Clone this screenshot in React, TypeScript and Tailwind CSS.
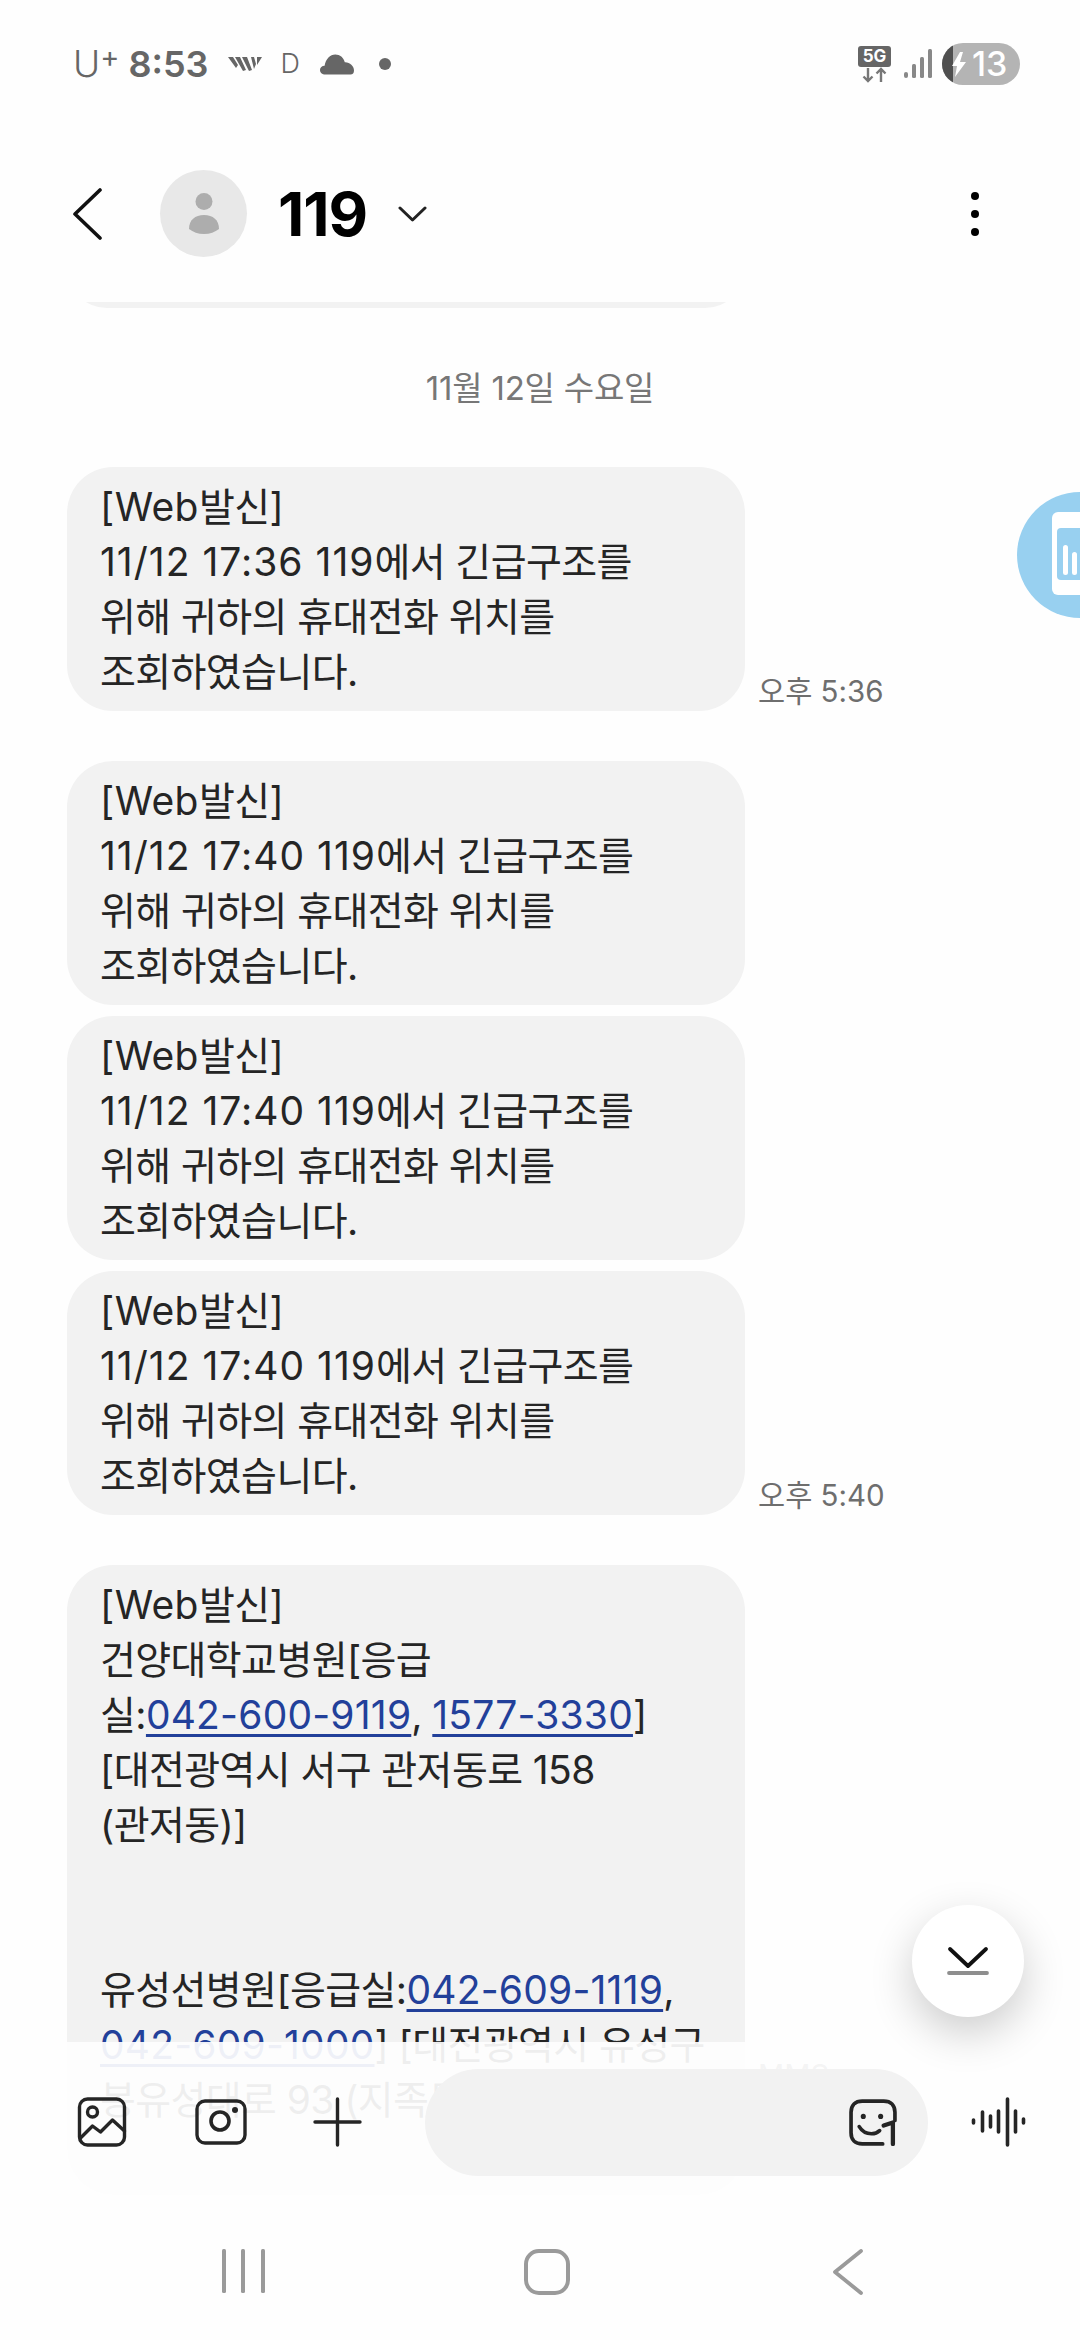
import React from "react";

function Link({ children }: { children: React.ReactNode }) {
  return <span className="tracking-[0.2px] text-[#22409a] underline decoration-[3px] underline-offset-[5px]">{children}</span>;
}

function Lat({ children }: { children: React.ReactNode }) {
  return <span className="tracking-[0.4px]">{children}</span>;
}

function Num({ children }: { children: React.ReactNode }) {
  return <span className="tracking-[1px]">{children}</span>;
}

function Bubble({ time, children, cls = "" }: { time?: string; children: React.ReactNode; cls?: string }) {
  return (
    <div className={`flex items-end ${cls}`}>
      <div className="w-[678px] rounded-[46px] bg-[#f2f2f2] px-[33px] py-[12px] text-[39px] leading-[55px] tracking-[-0.6px] text-[#252525]">
        {children}
      </div>
      {time && <span className="ml-[13px] text-[29.5px] leading-[40px] text-[#6e6e6e]">{time}</span>}
    </div>
  );
}

function Rescue({ t }: { t: string }) {
  return (
    <>
      <div><Lat>[Web</Lat>발신<Lat>]</Lat></div>
      <div><Num>11/12 {t} 119</Num>에서 긴급구조를</div>
      <div>위해 귀하의 휴대전화 위치를</div>
      <div>조회하였습니다.</div>
    </>
  );
}

export default function App() {
  return (
    <div className="relative flex h-[2340px] w-[1080px] flex-col overflow-hidden bg-[#fefefe] font-[Inter,'Noto_Sans_CJK_KR',sans-serif]">
      {/* status bar */}
      <div className="flex h-[125px] shrink-0 items-start justify-between pl-[73px] pr-[60px] pt-[42px] text-[#666666]">
        <div className="flex h-[44px] items-center">
          <span className="text-[37px] font-light leading-[44px]">U</span>
          <span className="mb-[14px] text-[29px] font-normal leading-[28px]">+</span>
          <span className="ml-[9px] text-[36px] font-semibold leading-[44px]">8:53</span>
          <svg className="ml-[19px]" width="34" height="16" viewBox="0 0 34 16" fill="#666">
            <path d="M0 1h5l5 8-2 3zM7 1h5l6 13-3 1zM14 1h5l5 13-3 1zM23 1h3l2 7-2 5zM29 1h5l-5 8z" />
          </svg>
          <span className="ml-[19px] text-[27px] font-light leading-[30px]">D</span>
          <svg className="ml-[19px]" width="36" height="21" viewBox="0 0 35 21" fill="#666">
            <path d="M6 20.5c-3.5 0-5.5-2-5.5-4.5 0-2.6 2-4.3 4.6-4.3C6.300 5 10.600.5 15.800.5c4.700 0 8.200 3 9.500 7.800 4.700-.3 9.200 3.500 9.200 8.200 0 2.500-1.200 4-3.500 4z" />
          </svg>
          <span className="ml-[24px] h-[12px] w-[12px] rounded-full bg-[#666666]" />
        </div>
        <div className="flex h-[44px] items-center">
          <div className="flex w-[33px] flex-col items-center">
            <span className="flex h-[21px] w-[33px] items-center justify-center rounded-[3px] bg-[#666666] text-[17px] font-bold leading-[21px] text-white">5G</span>
            <svg width="26" height="16" viewBox="0 0 26 16" fill="none" stroke="#777" strokeWidth="2.400">
              <path d="M6 1v13M1.500 9.500 6 14l4.500-4.500M19 15V2M14.500 6.500 19 2l4.500 4.500" />
            </svg>
          </div>
          <svg className="ml-[13px] mt-[-1px]" width="28" height="30" viewBox="0 0 28 30" fill="#888">
            <rect x="0" y="23" width="4" height="6" rx="2" />
            <rect x="8" y="15" width="4" height="14" rx="1.500" />
            <rect x="16" y="8" width="4" height="21" rx="1.500" />
            <rect x="24" y="0" width="4" height="29" rx="1.500" />
          </svg>
          <div className="relative ml-[10px] flex h-[42px] w-[78px] items-center overflow-hidden rounded-full bg-[#b4b4b4]">
            <span className="absolute left-0 top-0 h-full w-[11px] bg-[#4f4f4f]" />
            <svg className="relative ml-[10px]" width="14" height="25" viewBox="0 0 14 25" fill="#fff">
              <path d="M8 0 0 14h5l-2 11 11-15H8l3-10z" />
            </svg>
            <span className="relative ml-[6px] text-[34px] font-medium leading-[40px] text-white">13</span>
          </div>
        </div>
      </div>

      {/* header */}
      <div className="flex h-[177px] shrink-0 items-center pl-[73px] pr-[101px]">
        <svg width="29" height="52" viewBox="0 0 29 52" fill="none" stroke="#111" strokeWidth="3.600" strokeLinecap="round" strokeLinejoin="round">
          <path d="M27 2 2 26l25 24" />
        </svg>
        <div className="ml-[58px] flex h-[87px] w-[87px] items-center justify-center rounded-full bg-[#e8e8e8]">
          <svg width="30" height="42" viewBox="0 0 30 42" fill="#adadad">
            <circle cx="15" cy="8.500" r="8.500" />
            <path d="M0 36c0-9 6-14 15-14s15 5 15 14c-4 3-9 5-15 5S4 39 0 36z" />
          </svg>
        </div>
        <span className="ml-[31px] text-[61px] font-bold leading-[70px] tracking-[-1px] text-black">119</span>
        <svg className="ml-[31px]" width="29" height="16" viewBox="0 0 29 16" fill="none" stroke="#222" strokeWidth="3" strokeLinecap="round" strokeLinejoin="round">
          <path d="M2 2l12.500 12L27 2" />
        </svg>
        <div className="ml-auto flex flex-col gap-[10px]">
          <span className="h-[8px] w-[8px] rounded-full bg-black" />
          <span className="h-[8px] w-[8px] rounded-full bg-black" />
          <span className="h-[8px] w-[8px] rounded-full bg-black" />
        </div>
      </div>

      {/* messages */}
      <div className="flex min-h-0 flex-1 flex-col overflow-hidden pl-[67px]">
        <div className="flex h-[6px] shrink-0 items-end overflow-hidden">
          <div className="h-[80px] w-[678px] shrink-0 rounded-[46px] bg-[#f2f2f2]" />
        </div>
        <div className="mt-[60px] h-[40px] w-[946px] shrink-0 text-center text-[33px] leading-[40px] tracking-[-0.2px] text-[#777777]">
          11월 12일 수요일
        </div>
        <Bubble cls="mt-[59px] shrink-0" time="오후 5:36"><Rescue t="17:36" /></Bubble>
        <Bubble cls="mt-[50px] shrink-0"><Rescue t="17:40" /></Bubble>
        <Bubble cls="mt-[11px] shrink-0"><Rescue t="17:40" /></Bubble>
        <Bubble cls="mt-[11px] shrink-0" time="오후 5:40"><Rescue t="17:40" /></Bubble>
        <div className="mt-[50px] flex shrink-0 items-start">
          <div className="w-[678px] rounded-[46px] bg-[#f2f2f2] px-[33px] pb-[68px] pt-[12px] text-[39px] leading-[55px] tracking-[-0.6px] text-[#252525]">
            <div><Lat>[Web</Lat>발신<Lat>]</Lat></div>
            <div>건양대학교병원[응급</div>
            <div>실:<Link>042-600-9119</Link>, <Link>1577-3330</Link>]</div>
            <div>[대전광역시 서구 관저동로 158</div>
            <div>(관저동)]</div>
            <div className="h-[55px]" />
            <div className="h-[55px]" />
            <div className="whitespace-nowrap">유성선병원[응급실:<Link>042-609-1119</Link>,</div>
            <div className="whitespace-nowrap"><Link>042-609-1000</Link>] [대전광역시 유성구</div>
            <div className="whitespace-nowrap">봉유성대로 93 (지족동)]</div>
          </div>
          <span className="ml-[13px] mt-[490px] text-[29px] leading-[40px] text-[#6e6e6e]">MMS</span>
        </div>
      </div>

      {/* edge panel handle */}
      <div className="absolute left-[1017px] top-[492px] h-[126px] w-[126px] rounded-full bg-[#98d0f0]">
        <div className="absolute left-[35px] top-[20px] h-[83px] w-[60px] rounded-[6px] bg-white">
          <div className="absolute left-[5px] top-[16px] h-[52px] w-[50px] rounded-[4px] bg-[#98d0f0]">
            <span className="absolute left-[6px] top-[17px] h-[30px] w-[5px] rounded-full bg-white" />
            <span className="absolute left-[15px] top-[24px] h-[23px] w-[5px] rounded-full bg-white" />
          </div>
        </div>
      </div>

      {/* bottom translucent panel */}
      <div className="absolute bottom-0 left-0 flex h-[298px] w-full flex-col bg-[#fefefe]/93">
        <div className="flex h-[170px] shrink-0 items-center pb-[38px] pt-[28px]">
          <svg className="ml-[77px]" width="50" height="50" viewBox="0 0 49 50" fill="none" stroke="#252525" strokeWidth="3.400" strokeLinecap="round" strokeLinejoin="round">
            <rect x="2" y="2" width="45" height="46" rx="8" />
            <circle cx="15" cy="15" r="5" />
            <path d="M3 41 15 29l8 6 12-12 12 11" />
          </svg>
          <svg className="ml-[68px]" width="52" height="46" viewBox="0 0 52 46" fill="none" stroke="#252525" strokeWidth="3.400">
            <rect x="2" y="2" width="48" height="42" rx="8" />
            <circle cx="25" cy="22" r="9" strokeWidth="3.600" />
            <circle cx="40" cy="11" r="3" fill="#252525" stroke="none" />
          </svg>
          <svg className="ml-[66px]" width="49" height="50" viewBox="0 0 49 50" fill="none" stroke="#252525" strokeWidth="3.400" strokeLinecap="round">
            <path d="M24.500 2v46M2 25h45" />
          </svg>
          <div className="ml-[63px] flex h-[107px] w-[503px] shrink-0 items-center justify-end rounded-full bg-[#f2f2f2] pr-[30px]">
            <svg width="49" height="47" viewBox="0 0 48 46" fill="none" stroke="#252525" strokeWidth="3.600" strokeLinecap="round" strokeLinejoin="round">
              <path d="M33 44H13C6 44 2 40 2 33V13C2 6 6 2 13 2h21c7 0 11 4 11 11v8" />
              <circle cx="14" cy="17" r="2.500" fill="#252525" stroke="none" />
              <circle cx="31" cy="17" r="2.500" fill="#252525" stroke="none" />
              <path d="M10 27c3 5 7 7 12 7 3 0 6-1 8-3" />
              <path d="M34 26l9-3v21" strokeWidth="4.200" />
            </svg>
          </div>
          <svg className="ml-[42px]" width="58" height="50" viewBox="0 0 55 50" fill="none" stroke="#252525" strokeWidth="3.600" strokeLinecap="round">
            <path d="M2 23v3M11 15v19M19 19v11M27 14v21M36 2v46M44 14v21M52 22v4" />
          </svg>
        </div>
        <div className="flex min-h-0 flex-1 items-start pt-[37px]">
          <svg className="ml-[222px]" width="43" height="44" viewBox="0 0 43 44" fill="#9a9a9a">
            <rect x="0" y="0" width="4" height="44" rx="1.500" />
            <rect x="19" y="0" width="4" height="44" rx="1.500" />
            <rect x="39" y="0" width="4" height="44" rx="1.500" />
          </svg>
          <svg className="ml-[259px]" width="46" height="46" viewBox="0 0 46 46" fill="none" stroke="#9a9a9a" strokeWidth="4">
            <rect x="2" y="2" width="42" height="42" rx="13" />
          </svg>
          <svg className="ml-[262px]" width="32" height="46" viewBox="0 0 32 46" fill="none" stroke="#9a9a9a" strokeWidth="3.800" strokeLinecap="round" strokeLinejoin="round">
            <path d="M29 2 3 23l26 21" />
          </svg>
        </div>
      </div>

      {/* scroll to bottom button */}
      <div className="absolute left-[912px] top-[1905px] flex h-[112px] w-[112px] flex-col items-center justify-center rounded-full bg-white shadow-[0_16px_44px_rgba(0,0,0,0.2)]">
        <svg width="42" height="30" viewBox="0 0 42 30" fill="none" strokeLinecap="round" strokeLinejoin="round">
          <path d="M3 3l18 17L39 3" stroke="#111" strokeWidth="3.800" />
          <path d="M2 27h38" stroke="#8e8e8e" strokeWidth="3.800" />
        </svg>
      </div>
    </div>
  );
}
